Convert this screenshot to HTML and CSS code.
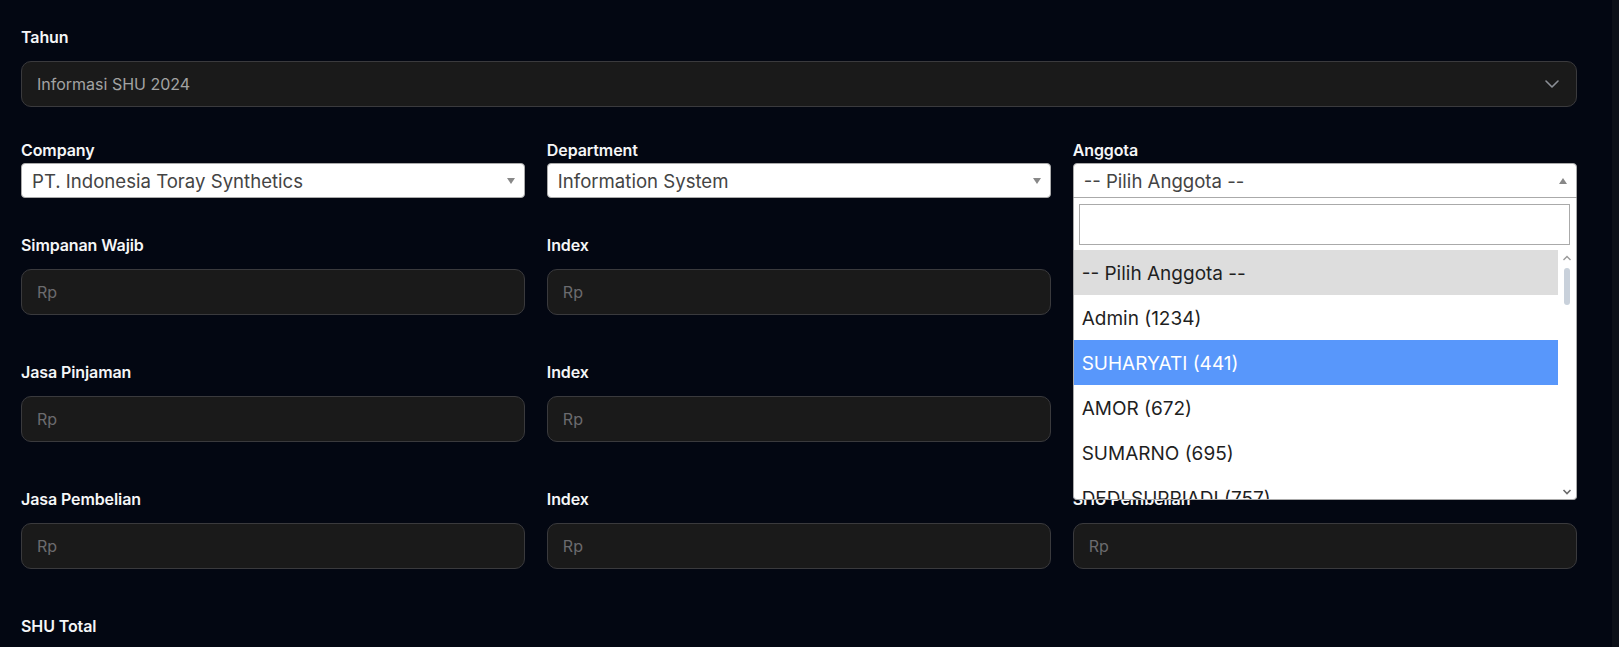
FILE: index.html
```html
<!DOCTYPE html>
<html lang="id">
<head>
<meta charset="utf-8">
<title>Informasi SHU</title>
<link rel="stylesheet" href="styles.css">
</head>
<body>
<div class="app">
  <main class="page">
    <div class="field">
      <label class="lbl">Tahun</label>
      <div class="control control-select">
        <span class="control-value">Informasi SHU 2024</span>
        <svg class="chev" width="14" height="8" viewBox="0 0 14 8"><path d="M1 1l6 6 6-6" fill="none" stroke="#8b8f96" stroke-width="1.6" stroke-linecap="round" stroke-linejoin="round"/></svg>
      </div>
    </div>

    <div class="grid grid-selects">
      <div class="field">
        <label class="lbl lbl-tight">Company</label>
        <div class="s2">
          <span class="s2-text">PT. Indonesia Toray Synthetics</span>
          <span class="s2-arrow"></span>
        </div>
      </div>
      <div class="field">
        <label class="lbl lbl-tight">Department</label>
        <div class="s2">
          <span class="s2-text">Information System</span>
          <span class="s2-arrow"></span>
        </div>
      </div>
      <div class="field field-anggota">
        <label class="lbl lbl-tight">Anggota</label>
        <div class="s2 s2-open">
          <span class="s2-text">-- Pilih Anggota --</span>
          <span class="s2-arrow s2-arrow-up"></span>
        </div>
        <div class="s2-dropdown">
          <div class="s2-search"><input class="s2-search-input" type="text"></div>
          <div class="s2-results">
            <ul class="s2-options">
              <li class="s2-opt s2-opt-selected">-- Pilih Anggota --</li>
              <li class="s2-opt">Admin (1234)</li>
              <li class="s2-opt s2-opt-hl">SUHARYATI (441)</li>
              <li class="s2-opt">AMOR (672)</li>
              <li class="s2-opt">SUMARNO (695)</li>
              <li class="s2-opt">DEDI SUPRIADI (757)</li>
              <li class="s2-opt">SUPARMAN (812)</li>
            </ul>
            <div class="s2-scroll">
              <svg class="sb-arrow" width="10" height="6" viewBox="0 0 10 6"><path d="M1.5 5L5 1.5 8.5 5" fill="none" stroke="#9a9a9a" stroke-width="1.4"/></svg>
              <div class="sb-thumb"></div>
              <svg class="sb-arrow sb-down" width="10" height="6" viewBox="0 0 10 6"><path d="M1.5 1L5 4.5 8.5 1" fill="none" stroke="#6a6a6a" stroke-width="1.6"/></svg>
            </div>
          </div>
        </div>
      </div>
    </div>

    <div class="grid grid-inputs">
      <div class="field">
        <label class="lbl">Simpanan Wajib</label>
        <input class="control" type="text" placeholder="Rp">
      </div>
      <div class="field">
        <label class="lbl">Index</label>
        <input class="control" type="text" placeholder="Rp">
      </div>
      <div class="field">
        <label class="lbl">SHU Simpanan</label>
        <input class="control" type="text" placeholder="Rp">
      </div>

      <div class="field">
        <label class="lbl">Jasa Pinjaman</label>
        <input class="control" type="text" placeholder="Rp">
      </div>
      <div class="field">
        <label class="lbl">Index</label>
        <input class="control" type="text" placeholder="Rp">
      </div>
      <div class="field">
        <label class="lbl">SHU Pinjaman</label>
        <input class="control" type="text" placeholder="Rp">
      </div>

      <div class="field">
        <label class="lbl">Jasa Pembelian</label>
        <input class="control" type="text" placeholder="Rp">
      </div>
      <div class="field">
        <label class="lbl">Index</label>
        <input class="control" type="text" placeholder="Rp">
      </div>
      <div class="field">
        <label class="lbl">SHU Pembelian</label>
        <input class="control" type="text" placeholder="Rp">
      </div>

      <div class="field">
        <label class="lbl">SHU Total</label>
        <input class="control" type="text" placeholder="Rp">
      </div>
    </div>
  </main>
  <div class="scroll-strip"></div>
</div>
</body>
</html>
```

FILE: styles.css
```css
html, body {
  margin: 0;
  padding: 0;
  height: 100%;
  overflow: hidden;
  background: #030712;
}

body {
  font-family: Inter, "Liberation Sans", sans-serif;
  color: #ffffff;
}

.app {
  display: flex;
  height: 647px;
}

.page {
  flex: 1;
  padding: 27px 35px 0 21px;
  box-sizing: border-box;
  min-width: 0;
}

.scroll-strip {
  width: 7px;
  flex: none;
  background: #0c1018;
}

.field {
  display: flex;
  flex-direction: column;
  min-width: 0;
}

.lbl {
  display: block;
  font-size: 16px;
  font-weight: 600;
  line-height: 20px;
  color: #f5f6f7;
  margin-bottom: 14px;
  letter-spacing: -0.1px;
}

.lbl-tight {
  margin-bottom: 3px;
}

.control {
  display: block;
  box-sizing: border-box;
  width: 100%;
  height: 46px;
  margin: 0;
  padding: 0 15px;
  border: 1px solid #3a3a3d;
  border-radius: 10px;
  background: #1a1a1a;
  font-family: Inter, "Liberation Sans", sans-serif;
  font-size: 16px;
  color: #a3a3a3;
  outline: none;
}

.control::placeholder {
  color: #6b6b6e;
}

.control-select {
  display: flex;
  align-items: center;
  justify-content: space-between;
  padding-right: 17px;
}

.control-value {
  color: #a3a3a3;
}

.grid {
  display: grid;
  grid-template-columns: repeat(3, 1fr);
  column-gap: 21.5px;
}

.grid-selects {
  margin-top: 33px;
}

.grid-inputs {
  margin-top: 37px;
  row-gap: 47px;
}

/* select2-like */
.s2 {
  box-sizing: border-box;
  height: 35px;
  display: flex;
  align-items: center;
  justify-content: space-between;
  background: #ffffff;
  border: 1px solid #aaaaaa;
  border-radius: 4px;
  padding: 1px 8px 0 10px;
  font-size: 18.6px;
  color: #444444;
}

.s2-text {
  white-space: nowrap;
  overflow: hidden;
}

.s2-arrow {
  width: 0;
  height: 0;
  border-left: 4.5px solid transparent;
  border-right: 4.5px solid transparent;
  border-top: 6px solid #888888;
  margin-right: 1px;
}

.s2-arrow-up {
  border-top: none;
  border-bottom: 6px solid #888888;
}

.s2-open {
  border-radius: 4px 4px 0 0;
}

.field-anggota {
  position: relative;
}

.s2-dropdown {
  position: absolute;
  left: 0;
  right: 0;
  top: 58px;
  box-sizing: border-box;
  background: #ffffff;
  border: 1px solid #aaaaaa;
  border-top: none;
  border-radius: 0 0 4px 4px;
  z-index: 5;
}

.s2-search {
  padding: 6px 6px 5px 5px;
}

.s2-search-input {
  display: block;
  box-sizing: border-box;
  width: 100%;
  height: 41px;
  margin: 0;
  border: 1px solid #aaaaaa;
  background: #fff;
  outline: none;
}

.s2-results {
  display: flex;
  height: 249px;
  overflow: hidden;
}

.s2-options {
  flex: 1;
  list-style: none;
  margin: 0;
  padding: 0;
  min-width: 0;
}

.s2-opt {
  height: 45px;
  line-height: 47px;
  padding-left: 8px;
  font-size: 19px;
  color: #1f1f1f;
  white-space: nowrap;
}

.s2-opt-selected {
  background: #dddddd;
}

.s2-opt-hl {
  background: #5897fb;
  color: #ffffff;
}

.s2-scroll {
  width: 18px;
  flex: none;
  display: flex;
  flex-direction: column;
  align-items: center;
  padding: 5px 0 4px;
  box-sizing: border-box;
}

.sb-thumb {
  width: 6px;
  height: 37px;
  margin-top: 7px;
  border-radius: 3px;
  background: #c9d1db;
}

.sb-down {
  margin-top: auto;
}
```
